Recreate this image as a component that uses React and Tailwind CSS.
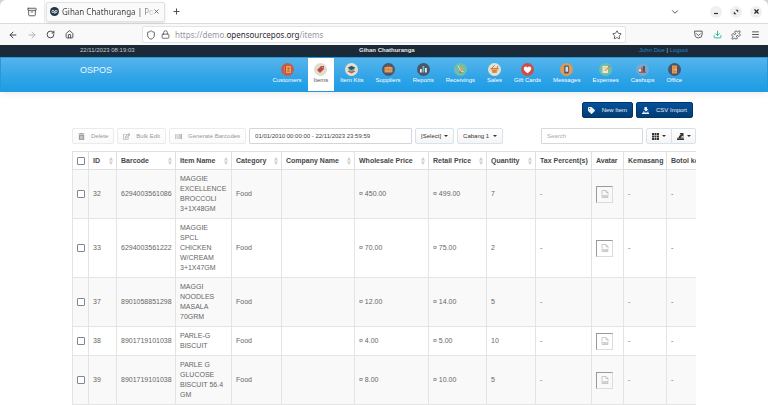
import React from "react";
import {
  Archive,
  ArrowLeft,
  ArrowRight,
  ChevronDown,
  Download,
  House,
  Lock,
  Menu,
  Plus,
  Puzzle,
  RotateCw,
  Shield,
  Star,
  X,
} from "lucide-react";
import { FaBarcode, FaRegEdit, FaTag, FaTrashAlt } from "react-icons/fa";

/* ---------- module icons ---------- */

const Disc = ({ fill, children }) => (
  <svg viewBox="0 0 26 26" className="size-[13px]" aria-hidden="true">
    <circle cx="13" cy="13" r="13" fill={fill} />
    {children}
  </svg>
);

const modules = [
  {
    name: "Customers",
    icon: (
      <Disc fill="#c8594f">
        <rect x="6" y="6" width="14" height="14" rx="1" fill="#e8a152" />
        <rect x="7" y="6" width="3" height="14" fill="#b9493f" />
        <circle cx="15" cy="11" r="2" fill="#a9573a" />
        <path d="M12 17c0-3 6-3 6 0z" fill="#a9573a" />
      </Disc>
    ),
  },
  {
    name: "Items",
    active: true,
    icon: (
      <Disc fill="#dfddcc">
        <path d="M14 6h6v6l-8 8-6-6z" fill="#c14a48" />
        <circle cx="17.5" cy="8.500" r="1.200" fill="#dfddcc" />
      </Disc>
    ),
  },
  {
    name: "Item Kits",
    icon: (
      <Disc fill="#e4e1d0">
        <path d="M5 17l8-4 8 4-8 4z" fill="#c8594f" />
        <path d="M5 13.500l8-4 8 4-8 4z" fill="#6fbfa8" />
        <path d="M5 9.500l8-4 8 4-8 5z" fill="#3f5166" />
      </Disc>
    ),
  },
  {
    name: "Suppliers",
    icon: (
      <Disc fill="#4b566c">
        <path d="M10 9V6h6v3" fill="none" stroke="#b5713b" strokeWidth="1.500" />
        <rect x="5" y="8" width="16" height="11" rx="1" fill="#e09a55" />
        <path d="M5 13h7M14 13h7" stroke="#c98242" />
        <rect x="12" y="12" width="2" height="2" fill="#b5713b" />
      </Disc>
    ),
  },
  {
    name: "Reports",
    icon: (
      <Disc fill="#4b566c">
        <rect x="6" y="12" width="3.500" height="7" fill="#f0ede0" />
        <rect x="11" y="6" width="3.500" height="13" fill="#6fbfa8" />
        <rect x="16" y="10" width="3.500" height="9" fill="#f0ede0" />
      </Disc>
    ),
  },
  {
    name: "Receivings",
    icon: (
      <Disc fill="#6fbfa8">
        <path d="M8 5l6 12h5" fill="none" stroke="#f0ede0" strokeWidth="1.500" />
        <path d="M11 9l5-2 3 7-5 2z" fill="#e8a152" />
        <circle cx="13" cy="18.500" r="2" fill="#c8594f" />
      </Disc>
    ),
  },
  {
    name: "Sales",
    icon: (
      <Disc fill="#e4e1d0">
        <path d="M5 10h16v3H5z" fill="#c98242" />
        <path d="M6.500 13h13l-2 7h-9z" fill="#e09a55" />
        <path d="M8 10l5-5M18 10l2-4" stroke="#a9573a" strokeWidth="1.500" />
        <path d="M10.500 14v5M13 14v5M15.500 14v5" stroke="#b5713b" />
      </Disc>
    ),
  },
  {
    name: "Gift Cards",
    icon: (
      <Disc fill="#cf4d49">
        <path
          d="M13 20.500C8 17 5.500 14.500 5.500 11.200 5.500 8.700 7.300 7 9.400 7c1.500 0 2.900.8 3.600 2.200C13.700 7.800 15.100 7 16.600 7c2.100 0 3.900 1.700 3.900 4.200 0 3.300-2.500 5.800-7.500 9.300z"
          fill="#fff"
        />
      </Disc>
    ),
  },
  {
    name: "Messages",
    icon: (
      <Disc fill="#e09a55">
        <rect x="8.500" y="5" width="9" height="16" rx="1.500" fill="#4b566c" />
        <rect x="11" y="7.500" width="5" height="10" fill="#cfe0ee" />
      </Disc>
    ),
  },
  {
    name: "Expenses",
    icon: (
      <Disc fill="#6fbfa8">
        <rect x="7" y="6" width="11" height="14" fill="#efe9d2" />
        <path d="M9 9h5M9 12h4M9 15h3" stroke="#b9b39b" />
        <path d="M12 17l1-4 6-7 2.500 2-6 7z" fill="#e8a152" />
        <path d="M18 7l1.500-1.500 2.300 2L20.500 9z" fill="#c8594f" />
      </Disc>
    ),
  },
  {
    name: "Cashups",
    icon: (
      <Disc fill="#76a9cc">
        <path d="M6 13h4v6H6z" fill="#f0ede0" />
        <path d="M10 9h4v10h-4z" fill="#c8594f" />
        <path d="M14 6h4v13h-4z" fill="#4b566c" />
        <path d="M6 17h14v3H6z" fill="#8a6b58" />
      </Disc>
    ),
  },
  {
    name: "Office",
    icon: (
      <Disc fill="#4b566c">
        <rect x="8" y="5" width="10" height="16" fill="#e09a55" />
        <path d="M10 9h6M10 17h6" stroke="#c98242" strokeWidth="1.500" />
        <circle cx="16" cy="13" r="1" fill="#fff" />
      </Disc>
    ),
  },
];

/* ---------- small glyphs ---------- */

const Caret = ({ className = "" }) => (
  <svg viewBox="0 0 4 2" className={`h-[2px] w-[4px] shrink-0 ${className}`} aria-hidden="true">
    <path d="M0 0h4L2 2z" fill="#333" />
  </svg>
);

const SortArrows = () => (
  <svg viewBox="0 0 8 16" className="h-2 w-[4px] shrink-0" aria-hidden="true">
    <path d="M0 7h8L4 0zM0 9h8l-4 7z" fill="#cfcfcf" />
  </svg>
);

const ImportGlyph = () => (
  <svg viewBox="0 0 14 14" className="size-[7px]" fill="currentColor" aria-hidden="true">
    <path d="M5 0h5v4h3L8 9 3 4h2zM2 9h2l4 2 4-2h1v2H2zM0 11.500h14V14H0z" />
  </svg>
);

const ExportGlyph = () => (
  <svg viewBox="0 0 14 14" className="size-[7px]" fill="currentColor" aria-hidden="true">
    <path d="M5 0h8v8l-2.500-2.500L7.500 9H4V6.500L7.500 2.500zM1 9h12v1.500H1zM0 11h14v3H0z" />
  </svg>
);

const GridGlyph = () => (
  <svg viewBox="0 0 14 14" className="size-[7px]" fill="currentColor" aria-hidden="true">
    <path d="M0 0h4v4H0zM5 0h4v4H5zM10 0h4v4h-4zM0 5h4v4H0zM5 5h4v4H5zM10 5h4v4h-4zM0 10h4v4H0zM5 10h4v4H5zM10 10h4v4h-4z" />
  </svg>
);

const PocketGlyph = () => (
  <svg viewBox="0 0 16 16" className="size-[9px]" fill="none" stroke="#4a4a50" strokeWidth="1.600" aria-hidden="true">
    <path d="M1.500 2h13v5.500a6.500 6.500 0 0 1-13 0zM4.500 6.500L8 10l3.500-3.500" strokeLinecap="round" strokeLinejoin="round" />
  </svg>
);

/* ---------- browser window ---------- */

const IconButton = ({ label, className = "", children }) => (
  <button type="button" aria-label={label} className={`grid shrink-0 place-items-center ${className}`}>
    {children}
  </button>
);

const TabStrip = () => (
  <div className="flex h-[23px] items-center rounded-t-[6px] bg-white pr-[6px] pl-[26px] text-[#45454b]">
    <IconButton label="Firefox View" className="size-3">
      <Archive size={10} strokeWidth={2} />
    </IconButton>
    <div className="ml-[6px] flex h-full items-center border-l border-[#ececec] pl-px">
      <div className="flex h-5 w-[119px] items-center rounded-[2px] border border-[#e2e2e2] bg-[#fafafa] pr-1 pl-[3px] shadow-sm">
        <svg viewBox="0 0 18 18" className="size-[9px] shrink-0" aria-hidden="true">
          <circle cx="9" cy="9" r="9" fill="#22384c" />
          <circle cx="6" cy="9" r="2.300" fill="none" stroke="#fff" strokeWidth="1.500" />
          <circle cx="12" cy="9" r="2.300" fill="none" stroke="#fff" strokeWidth="1.500" />
          <path d="M9.700 9v5" stroke="#fff" strokeWidth="1.500" />
        </svg>
        <span className="ml-[3px] min-w-0 flex-1 overflow-hidden bg-linear-to-r from-[#3b3b40] from-85% to-[#dddddd] bg-clip-text font-['Noto_Sans',sans-serif] text-[8px] leading-3 whitespace-nowrap text-transparent">
          Gihan Chathuranga | Po
        </span>
        <IconButton label="Close tab" className="w-[7px]">
          <X size={7} strokeWidth={2.5} />
        </IconButton>
      </div>
    </div>
    <IconButton label="New tab" className="ml-[6px] size-[10px]">
      <Plus size={9} strokeWidth={2.5} />
    </IconButton>
    <div className="ml-auto flex items-center gap-2">
      <IconButton label="List all tabs" className="mr-[22px] size-[10px]">
        <ChevronDown size={10} strokeWidth={2.2} />
      </IconButton>
      <IconButton label="Minimize" className="size-3 rounded-full bg-[#f0f0f0]">
        <svg viewBox="0 0 8 8" className="size-2" aria-hidden="true">
          <path d="M2 5.500h4" stroke="#333" strokeWidth="1.200" />
        </svg>
      </IconButton>
      <IconButton label="Restore" className="size-3 rounded-full bg-[#f0f0f0]">
        <svg viewBox="0 0 8 8" className="size-2" fill="#333" aria-hidden="true">
          <path d="M3.500 1.800h2.700v2.700zM1.800 3.500v2.700h2.700z" />
        </svg>
      </IconButton>
      <IconButton label="Close" className="size-3 rounded-full bg-[#f0f0f0] text-[#222]">
        <X size={7} strokeWidth={4} />
      </IconButton>
    </div>
  </div>
);

const AddressBar = () => (
  <div className="flex h-[22px] items-center border-t border-[#dcdcdf] bg-[#f9f9fa] pr-2 pl-[7px] text-[#45454b]">
    <div className="flex gap-2">
      <IconButton label="Back" className="size-[11px]">
        <ArrowLeft size={10} strokeWidth={2.4} />
      </IconButton>
      <IconButton label="Forward" className="size-[11px] text-[#b5b5b9]">
        <ArrowRight size={10} strokeWidth={2.4} />
      </IconButton>
      <IconButton label="Reload" className="size-[11px]">
        <RotateCw size={9} strokeWidth={2.6} />
      </IconButton>
      <IconButton label="Home" className="size-[11px]">
        <House size={9} strokeWidth={2.4} />
      </IconButton>
    </div>
    <div className="ml-[67px] flex h-[17px] min-w-0 flex-1 items-center rounded-[2px] border border-[#e4e4e6] bg-white pr-[3px] pl-[3px]">
      <Shield size={10} strokeWidth={2} className="shrink-0" />
      <Lock size={9} strokeWidth={2} className="ml-[5px] shrink-0" />
      <span className="ml-[5px] flex-1 font-['Noto_Sans',sans-serif] text-[8px] leading-3 whitespace-nowrap text-[#97979c]">
        https://demo.<span className="text-[#2b2b30]">opensourcepos.org</span>/items
      </span>
      <IconButton label="Bookmark this page" className="size-[10px]">
        <Star size={10} strokeWidth={2} />
      </IconButton>
    </div>
    <div className="ml-[67px] flex gap-[9px]">
      <IconButton label="Save to Pocket" className="size-[10px]">
        <PocketGlyph />
      </IconButton>
      <IconButton label="Downloads" className="size-[10px] text-[#2dbb9a]">
        <Download size={9} strokeWidth={2.6} />
      </IconButton>
      <IconButton label="Extensions" className="size-[10px]">
        <Puzzle size={10} strokeWidth={2} />
      </IconButton>
      <IconButton label="Application menu" className="size-[10px]">
        <Menu size={9} strokeWidth={2.4} />
      </IconButton>
    </div>
  </div>
);

/* ---------- page header ---------- */

const TopBar = () => (
  <div className="bg-[#1a2a39]">
    <div className="mx-auto flex h-3 max-w-[624px] justify-between px-2 pt-px text-[#c3c9cf]">
      <span>22/11/2023 08:19:03</span>
      <strong className="text-[#e4e7ea]">Gihan Chathuranga</strong>
      <span>
        <a href="#profile" className="text-[#2585c2]">John Doe</a>
        {" | "}
        <a href="#logout" className="text-[#2585c2]">Logout</a>
      </span>
    </div>
  </div>
);

const ModuleNav = () => (
  <header className="border border-[#2499dc] bg-linear-to-b from-[#54b4eb] via-[#2fa4e7] via-60% to-[#1d9ce5] shadow-md shadow-black/5">
    <div className="mx-auto flex h-[33px] max-w-[624px] justify-between px-2">
      <a href="#home" className="pt-[6px] text-[9px] leading-3 text-white/90">OSPOS</a>
      <nav className="flex">
        {modules.map((m) => (
          <a
            key={m.name}
            href={`#${m.name}`}
            className={`flex flex-col items-center px-[6px] pt-[5px] whitespace-nowrap ${
              m.active ? "bg-white text-[#555]" : "text-white"
            }`}
          >
            {m.icon}
            <span>{m.name}</span>
          </a>
        ))}
      </nav>
    </div>
  </header>
);

/* ---------- toolbar ---------- */

const Primary = ({ icon, children }) => (
  <button
    type="button"
    className="flex h-4 items-center gap-[7px] rounded-[2px] border border-[#02366b] bg-linear-to-b from-[#04519b] to-[#033c73] px-[5px] text-[#e8eef5]"
  >
    {icon}
    {children}
  </button>
);

const Disabled = ({ icon, children }) => (
  <button
    type="button"
    disabled
    className="flex h-4 items-center gap-[6px] rounded-[2px] border border-[#ebebeb] bg-linear-to-b from-white to-[#fafafa] px-[5px] text-[#999]"
  >
    {icon}
    {children}
  </button>
);

const Dropdown = ({ label, width, options }) => (
  <label className={`relative flex h-4 items-center ${width}`}>
    <span className="sr-only">{label}</span>
    <select className="h-full w-full appearance-none rounded-[2px] border border-[#d8e2ec] bg-linear-to-b from-white to-[#f5f5f5] pl-[5px] leading-3 text-[#333]">
      {options.map((o) => (
        <option key={o}>{o}</option>
      ))}
    </select>
    <Caret className="pointer-events-none absolute right-[6px]" />
  </label>
);

const Toolbar = () => (
  <div className="flex items-center justify-between">
    <div className="flex items-center gap-[3px]">
      <Disabled icon={<FaTrashAlt size={7} />}>Delete</Disabled>
      <Disabled icon={<FaRegEdit size={7} />}>Bulk Edit</Disabled>
      <Disabled icon={<FaBarcode size={7} />}>Generate Barcodes</Disabled>
      <input
        type="text"
        aria-label="Date range"
        defaultValue="01/01/2010 00:00:00 - 22/11/2023 23:59:59"
        className="h-4 w-[163px] rounded-[1px] border border-[#d5d5d5] px-[5px] text-[#444]"
      />
      <Dropdown label="Filter" width="w-[39px]" options={["[Select]"]} />
      <Dropdown label="Stock location" width="w-[46px]" options={["Cabang 1"]} />
    </div>
    <div className="flex items-center gap-[3px]">
      <input
        type="search"
        aria-label="Search"
        placeholder="Search"
        className="h-4 w-[102px] rounded-[1px] border border-[#d8d8d8] px-[5px] placeholder:text-[#aaa]"
      />
      <div className="flex text-[#333]">
        <button type="button" aria-label="Columns" className="flex h-4 w-[26px] items-center justify-center gap-[3px] rounded-l-[2px] border border-[#d8e2ec] bg-linear-to-b from-white to-[#f5f5f5]">
          <GridGlyph />
          <Caret />
        </button>
        <button type="button" aria-label="Export data" className="flex h-4 w-6 items-center justify-center gap-[3px] rounded-r-[2px] border border-l-0 border-[#d8e2ec] bg-linear-to-b from-white to-[#f5f5f5]">
          <ExportGlyph />
          <Caret />
        </button>
      </div>
    </div>
  </div>
);

/* ---------- table ---------- */

const columns = [
  { title: "ID", width: "w-[28px]", sortable: true },
  { title: "Barcode", width: "w-[59px]", sortable: true },
  { title: "Item Name", width: "w-[56px]", sortable: true },
  { title: "Category", width: "w-[50px]", sortable: true },
  { title: "Company Name", width: "w-[73px]", sortable: true },
  { title: "Wholesale Price", width: "w-[74px]", sortable: true },
  { title: "Retail Price", width: "w-[58px]", sortable: true },
  { title: "Quantity", width: "w-[49px]", sortable: true },
  { title: "Tax Percent(s)", width: "w-[56px]" },
  { title: "Avatar", width: "w-[32px]" },
  { title: "Kemasang", width: "w-[43px]" },
  { title: "Botol kecil", width: "w-[60px]" },
];

const items = [
  { id: "32", barcode: "6294003561086", name: "MAGGIE\nEXCELLENCE\nBROCCOLI\n3+1X48GM", cost: "450.00", price: "499.00", qty: "7", avatar: true },
  { id: "33", barcode: "6294003561222", name: "MAGGIE\nSPCL\nCHICKEN\nW/CREAM\n3+1X47GM", cost: "70.00", price: "75.00", qty: "2", avatar: true },
  { id: "37", barcode: "8901058851298", name: "MAGGI\nNOODLES\nMASALA\n70GRM", cost: "12.00", price: "14.00", qty: "5", avatar: false },
  { id: "38", barcode: "8901719101038", name: "PARLE-G\nBISCUIT", cost: "4.00", price: "5.00", qty: "10", avatar: true },
  { id: "39", barcode: "8901719101038", name: "PARLE G\nGLUCOSE\nBISCUIT 56.4\nGM", cost: "8.00", price: "10.00", qty: "5", avatar: true },
];

const Tick = ({ label }) => (
  <input
    type="checkbox"
    aria-label={label}
    className="block size-2 appearance-none rounded-[1px] border border-[#85858f] bg-white checked:bg-[#2fa4e7]"
  />
);

const Avatar = () => (
  <span
    role="img"
    aria-label="No picture"
    className="grid size-[17px] place-items-center border border-t-[#9a9a9a] border-r-[#dcdcdc] border-b-[#dcdcdc] border-l-[#9a9a9a]"
  >
    <svg viewBox="0 0 16 16" className="size-2" fill="none" stroke="#b9b9b9" strokeWidth="1.500" aria-hidden="true">
      <path d="M2 9V1h8l4 4v4M10 1v4h4M1 11.500h14M2 15v-2l3-2 3 3 3-2 3 1v2z" />
    </svg>
  </span>
);

const Cell = ({ children }) => (
  <td className="border-b border-l border-[#e4e4e4] py-1 pl-1">{children}</td>
);

const ItemTable = () => (
  <div className="overflow-hidden">
    <table className="w-[654px] table-fixed border-separate border-spacing-0 text-[7px] leading-[10px] text-[#666]">
      <thead>
        <tr className="h-[19px] text-left text-[#484848]">
          <th className="w-4 border border-r-0 border-[#e0e0e0] pl-1">
            <Tick label="Select all" />
          </th>
          {columns.map((c) => (
            <th key={c.title} className={`border border-r-0 border-[#e0e0e0] pr-[3px] pl-1 whitespace-nowrap ${c.width}`}>
              <div className="flex items-center justify-between">
                {c.title}
                {c.sortable && <SortArrows />}
              </div>
            </th>
          ))}
        </tr>
      </thead>
      <tbody>
        {items.map((it) => (
          <tr key={it.id} className="odd:bg-[#f9f9f9]">
            <Cell>
              <Tick label={`Select item ${it.id}`} />
            </Cell>
            <Cell>{it.id}</Cell>
            <Cell>{it.barcode}</Cell>
            <Cell>
              <span className="whitespace-pre">{it.name}</span>
            </Cell>
            <Cell>Food</Cell>
            <Cell />
            <Cell>¤ {it.cost}</Cell>
            <Cell>¤ {it.price}</Cell>
            <Cell>{it.qty}</Cell>
            <Cell>-</Cell>
            <Cell>{it.avatar && <Avatar />}</Cell>
            <Cell>-</Cell>
            <Cell>-</Cell>
          </tr>
        ))}
      </tbody>
    </table>
  </div>
);

export default function App() {
  return (
    <div className="min-h-screen bg-white font-['Liberation_Sans',Arial,sans-serif] text-[6px] leading-2">
      <div className="bg-[#d4d4d4]">
        <TabStrip />
      </div>
      <AddressBar />
      <TopBar />
      <ModuleNav />
      <main className="mx-auto flex max-w-[624px] flex-col pt-[10px]">
        <div className="flex justify-end gap-[3px] pr-[3px]">
          <Primary icon={<FaTag size={7} />}>New Item</Primary>
          <Primary icon={<ImportGlyph />}>CSV Import</Primary>
        </div>
        <div className="pt-[10px] pb-[7px]">
          <Toolbar />
        </div>
        <ItemTable />
      </main>
    </div>
  );
}
